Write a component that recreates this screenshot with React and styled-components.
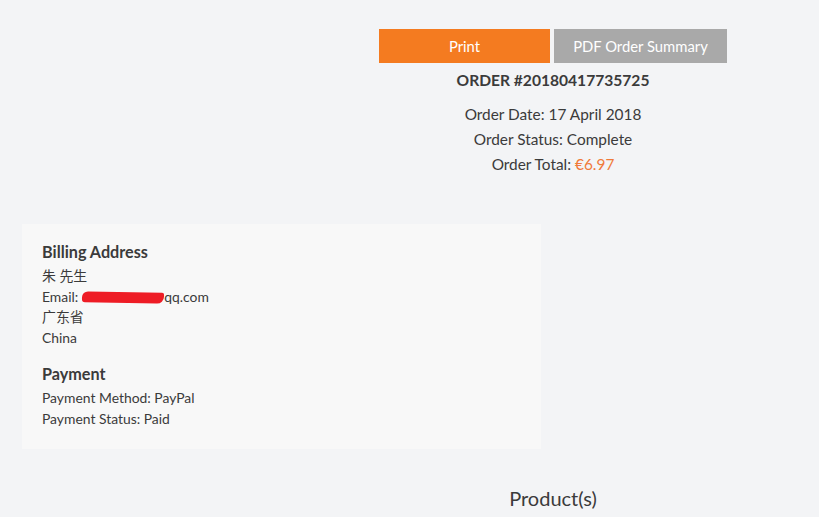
import React from "react";
import styled, { createGlobalStyle } from "styled-components";

const Global = createGlobalStyle`
  html, body { margin: 0; padding: 0; overflow: hidden; }
  body {
    background: #f3f4f6;
    font-family: Lato, "Noto Sans CJK SC", sans-serif;
    color: #3b3b3b;
  }
`;

const Viewport = styled.div`
  width: 100vw;
  overflow: hidden;
`;

const Page = styled.div`
  width: 1062px;
  padding: 29px 0 0 22px;
  display: flex;
  flex-direction: column;
`;

const Summary = styled.div`
  display: flex;
  flex-direction: column;
  align-items: center;
`;

const Buttons = styled.div`
  display: flex;
  gap: 4px;
`;

const Button = styled.button`
  border: none;
  height: 34px;
  width: ${(p) => p.$w}px;
  background: ${(p) => (p.$primary ? "#f47b20" : "#a9a9a9")};
  color: #fff;
  font-family: Lato, sans-serif;
  font-size: 14.8px;
  padding: 0;
  cursor: pointer;
`;

const OrderTitle = styled.h2`
  margin: 7px 0 0;
  font-size: 15.6px;
  line-height: 20px;
  font-weight: 700;
  color: #3b3b3b;
`;

const Meta = styled.div`
  margin-top: 12px;
  display: flex;
  flex-direction: column;
  align-items: center;
  font-size: 15.4px;
  line-height: 25px;
`;

const Price = styled.span`
  color: #f07a3a;
`;

const Card = styled.div`
  margin-top: 47px;
  width: 519px;
  box-sizing: border-box;
  background: #f8f8f8;
  padding: 18px 20px 19px;
`;

const Section = styled.div`
  & + & {
    margin-top: 16px;
  }
`;

const Heading = styled.h3`
  margin: 0 0 4px;
  font-size: 16.2px;
  line-height: 20px;
  font-weight: 700;
`;

const Line = styled.div`
  font-size: 13.9px;
  line-height: 20.6px;
`;

const Redact = styled.span`
  display: inline-block;
  width: 82px;
  height: 11px;
  background: #ee1c25;
  border-radius: 6px 2px 7px 3px;
  vertical-align: -1px;
  margin-left: 4px;
  transform: rotate(1deg);
`;

const ProductsTitle = styled.h3`
  margin: 37px 0 0;
  text-align: center;
  font-size: 20px;
  line-height: 24px;
  font-weight: 400;
`;

export default function App() {
  return (
    <Viewport>
      <Global />
      <Page>
        <Summary>
          <Buttons>
            <Button $primary $w={171}>Print</Button>
            <Button $w={173}>PDF Order Summary</Button>
          </Buttons>
          <OrderTitle>ORDER #20180417735725</OrderTitle>
          <Meta>
            <div>Order Date: 17 April 2018</div>
            <div>Order Status: Complete</div>
            <div>
              Order Total: <Price>€6.97</Price>
            </div>
          </Meta>
        </Summary>
        <Card>
          <Section>
            <Heading>Billing Address</Heading>
            <Line>朱 先生</Line>
            <Line>
              Email:<Redact />qq.com
            </Line>
            <Line>广东省</Line>
            <Line>China</Line>
          </Section>
          <Section>
            <Heading>Payment</Heading>
            <Line>Payment Method: PayPal</Line>
            <Line>Payment Status: Paid</Line>
          </Section>
        </Card>
        <ProductsTitle>Product(s)</ProductsTitle>
      </Page>
    </Viewport>
  );
}
